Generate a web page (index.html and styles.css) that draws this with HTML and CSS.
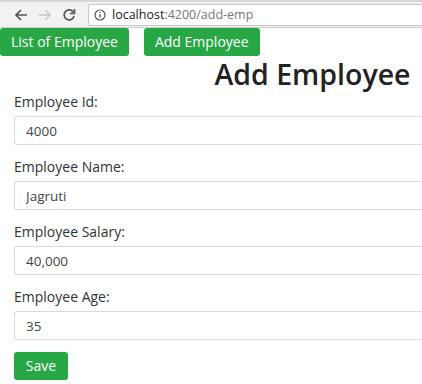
FILE: index.html
```html
<!DOCTYPE html>
<html lang="en">
<head>
  <meta charset="UTF-8">
  <title>Add Employee</title>
  <link rel="stylesheet" href="styles.css">
</head>
<body>
  <!-- Browser toolbar -->
  <div class="toolbar">
    <span class="nav-btn">
      <svg width="14" height="14" viewBox="0 0 14 14"><path d="M13 7H2M7 2L2 7l5 5" fill="none" stroke="#555" stroke-width="1.7"/></svg>
    </span>
    <span class="nav-btn">
      <svg width="14" height="14" viewBox="0 0 14 14"><path d="M1 7h11M7 2l5 5-5 5" fill="none" stroke="#c4c4c4" stroke-width="1.4"/></svg>
    </span>
    <span class="nav-btn">
      <svg width="14" height="14" viewBox="0 0 14 14"><path d="M11.5 4.5A5 5 0 1 0 12 8" fill="none" stroke="#555" stroke-width="1.7"/><path d="M12.5 1v4.5H8" fill="none" stroke="#555" stroke-width="1.7"/></svg>
    </span>
    <div class="url-box">
      <svg width="12" height="12" viewBox="0 0 12 12"><circle cx="6" cy="6" r="5" fill="none" stroke="#555" stroke-width="1.2"/><path d="M6 5v3.5M6 3v1" stroke="#555" stroke-width="1.3"/></svg>
      <span class="host">localhost</span><span class="path">:4200/add-emp</span>
    </div>
  </div>

  <div class="page">
    <nav class="top-links">
      <a href="#" class="btn">List of Employee</a>
      <a href="#" class="btn">Add Employee</a>
    </nav>

    <h1 class="title">Add Employee</h1>

    <form class="emp-form">
      <div class="form-group">
        <label>Employee Id:</label>
        <input type="text" value="4000">
      </div>
      <div class="form-group">
        <label>Employee Name:</label>
        <input type="text" value="Jagruti">
      </div>
      <div class="form-group">
        <label>Employee Salary:</label>
        <input type="text" value="40,000">
      </div>
      <div class="form-group">
        <label>Employee Age:</label>
        <input type="text" value="35">
      </div>
      <button type="button" class="btn save">Save</button>
    </form>
  </div>
</body>
</html>
```

FILE: styles.css
```css
* {
  margin: 0;
  padding: 0;
  box-sizing: border-box;
}

body {
  background: white;
  font-family: "Open Sans", Arial, sans-serif;
  color: #212529;
}

/* Browser toolbar */
.toolbar {
  height: 28px;
  background: #f2f2f2;
  border-top: 2px solid #d6d6d6;
  border-bottom: 1px solid #d0d0d0;
  display: flex;
  align-items: center;
  padding-left: 14px;
}

.nav-btn {
  width: 24px;
  flex-shrink: 0;
  display: flex;
  align-items: center;
}

.url-box {
  flex: 1;
  min-width: 0;
  margin-left: 2px;
  height: 22px;
  background: white;
  border: 1px solid #c8c8c8;
  border-right: none;
  border-radius: 2px 0 0 2px;
  display: flex;
  align-items: center;
  padding-left: 5px;
  font-size: 12.5px;
  white-space: nowrap;
}

.url-box svg {
  margin-right: 6px;
}

.host {
  color: #222;
}

.path {
  color: #777;
}

/* Page */
.top-links {
  display: flex;
  gap: 15px;
  height: 29px;
}

.btn {
  display: inline-block;
  background-color: #28a745;
  color: white;
  text-decoration: none;
  border: none;
  border-radius: 3px;
  font-family: "Open Sans", Arial, sans-serif;
  font-size: 14px;
  height: 28px;
  line-height: 28px;
  padding: 0 11px;
}

.title {
  text-align: center;
  padding-left: 203px;
  font-size: 28.5px;
  font-weight: 600;
  line-height: 35px;
  color: #222;
}

.emp-form {
  padding-left: 14px;
}

.form-group {
  margin-bottom: 12px;
}

.form-group label {
  display: block;
  font-size: 14px;
  line-height: 20px;
  margin-bottom: 4px;
  color: #333;
}

.form-group input {
  display: block;
  width: 100%;
  height: 29px;
  border: 1px solid #d9d9d9;
  border-right: none;
  border-radius: 3px 0 0 3px;
  padding: 0 11px;
  font-family: "Open Sans", Arial, sans-serif;
  font-size: 13.5px;
  color: #444;
}

.save {
  width: 54px;
  padding: 0;
  text-align: center;
}
```
